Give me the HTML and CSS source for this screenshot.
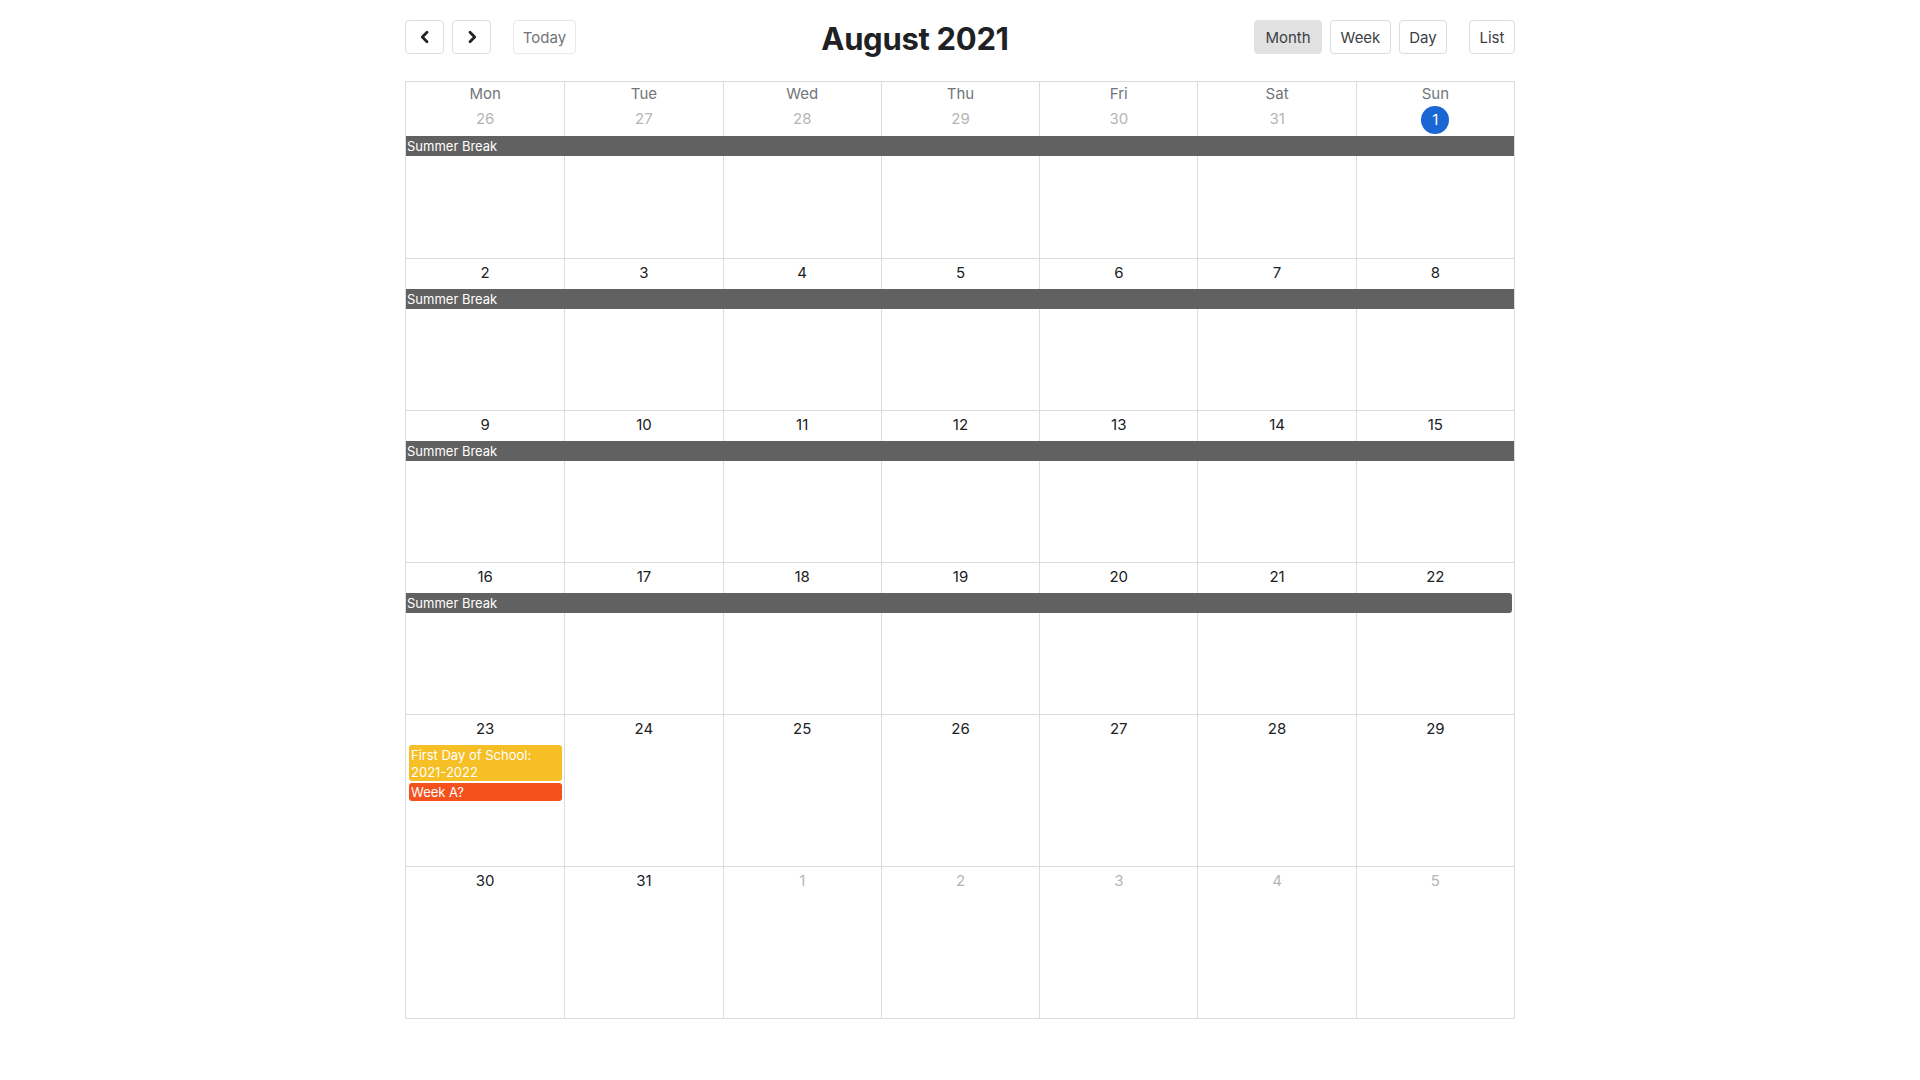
FILE: index.html
```html
<!DOCTYPE html>
<html lang="en">
<head>
<meta charset="utf-8">
<title>August 2021</title>
<link rel="stylesheet" href="styles.css">
</head>
<body>
<div class="container">
  <div class="toolbar">
    <div class="tb-left">
      <div class="btn-group">
        <button class="btn btn-icon" aria-label="prev"><svg width="14" height="14" viewBox="0 0 14 14"><path d="M9 2.3 L4.3 7 L9 11.7" fill="none" stroke="#222" stroke-width="2.8" stroke-linecap="round" stroke-linejoin="round"/></svg></button>
        <button class="btn btn-icon" aria-label="next"><svg width="14" height="14" viewBox="0 0 14 14"><path d="M5 2.3 L9.7 7 L5 11.7" fill="none" stroke="#222" stroke-width="2.8" stroke-linecap="round" stroke-linejoin="round"/></svg></button>
      </div>
      <button class="btn btn-today">Today</button>
    </div>
    <h2 class="title">August 2021</h2>
    <div class="tb-right">
      <div class="btn-group">
        <button class="btn btn-view btn-month is-active">Month</button>
        <button class="btn btn-view btn-week">Week</button>
        <button class="btn btn-view btn-day">Day</button>
      </div>
      <button class="btn btn-view btn-list">List</button>
    </div>
  </div>

  <div class="cal">
    <div class="cal-head">
      <div class="dow">Mon</div><div class="dow">Tue</div><div class="dow">Wed</div><div class="dow">Thu</div><div class="dow">Fri</div><div class="dow">Sat</div><div class="dow">Sun</div>
    </div>

    <div class="week week-first">
      <div class="day c1"><span class="num other">26</span></div>
      <div class="day c2"><span class="num other">27</span></div>
      <div class="day c3"><span class="num other">28</span></div>
      <div class="day c4"><span class="num other">29</span></div>
      <div class="day c5"><span class="num other">30</span></div>
      <div class="day c6"><span class="num other">31</span></div>
      <div class="day c7"><span class="num today">1</span></div>
      <div class="ev ev-gray ev-span-all">Summer Break</div>
    </div>

    <div class="week">
      <div class="day c1"><span class="num">2</span></div>
      <div class="day c2"><span class="num">3</span></div>
      <div class="day c3"><span class="num">4</span></div>
      <div class="day c4"><span class="num">5</span></div>
      <div class="day c5"><span class="num">6</span></div>
      <div class="day c6"><span class="num">7</span></div>
      <div class="day c7"><span class="num">8</span></div>
      <div class="ev ev-gray ev-span-all">Summer Break</div>
    </div>

    <div class="week">
      <div class="day c1"><span class="num">9</span></div>
      <div class="day c2"><span class="num">10</span></div>
      <div class="day c3"><span class="num">11</span></div>
      <div class="day c4"><span class="num">12</span></div>
      <div class="day c5"><span class="num">13</span></div>
      <div class="day c6"><span class="num">14</span></div>
      <div class="day c7"><span class="num">15</span></div>
      <div class="ev ev-gray ev-span-all">Summer Break</div>
    </div>

    <div class="week">
      <div class="day c1"><span class="num">16</span></div>
      <div class="day c2"><span class="num">17</span></div>
      <div class="day c3"><span class="num">18</span></div>
      <div class="day c4"><span class="num">19</span></div>
      <div class="day c5"><span class="num">20</span></div>
      <div class="day c6"><span class="num">21</span></div>
      <div class="day c7"><span class="num">22</span></div>
      <div class="ev ev-gray ev-span-all ev-end">Summer Break</div>
    </div>

    <div class="week">
      <div class="day c1"><span class="num">23</span></div>
      <div class="day c2"><span class="num">24</span></div>
      <div class="day c3"><span class="num">25</span></div>
      <div class="day c4"><span class="num">26</span></div>
      <div class="day c5"><span class="num">27</span></div>
      <div class="day c6"><span class="num">28</span></div>
      <div class="day c7"><span class="num">29</span></div>
      <div class="ev-stack c1">
        <div class="ev ev-single ev-yellow">First Day of School: 2021-2022</div>
        <div class="ev ev-single ev-red">Week A?</div>
      </div>
    </div>

    <div class="week">
      <div class="day c1"><span class="num">30</span></div>
      <div class="day c2"><span class="num">31</span></div>
      <div class="day c3"><span class="num other">1</span></div>
      <div class="day c4"><span class="num other">2</span></div>
      <div class="day c5"><span class="num other">3</span></div>
      <div class="day c6"><span class="num other">4</span></div>
      <div class="day c7"><span class="num other">5</span></div>
    </div>
  </div>
</div>
</body>
</html>
```

FILE: styles.css
```css
html, body {
  margin: 0;
  padding: 0;
  background: #fff;
}

body {
  font-family: "Inter", "Open Sans", "Liberation Sans", sans-serif;
  color: #3c4043;
}

.container {
  width: 1110px;
  margin: 0 auto;
  padding-top: 20px;
}

/* toolbar */
.toolbar {
  display: flex;
  justify-content: space-between;
  align-items: center;
  height: 34px;
  margin-bottom: 27px;
}

.tb-left, .tb-right {
  display: flex;
  align-items: center;
  gap: 22px;
}

.btn-group {
  display: flex;
  gap: 8px;
}

.btn {
  font-family: inherit;
  height: 34px;
  border: 1px solid #dadce0;
  border-radius: 4px;
  background: #fff;
  color: #3c4043;
  font-size: 15px;
  padding: 0;
  display: flex;
  align-items: center;
  justify-content: center;
  cursor: pointer;
}

.btn-icon { width: 39px; }
.btn-month { width: 68px; }
.btn-week { width: 61px; }
.btn-day { width: 48px; }
.btn-list { width: 46px; }

.btn-today {
  width: 63px;
  color: #70757a;
  border-color: #e8e8e8;
}

.btn-view.is-active {
  background: #e1e1e1;
  border-color: #e1e1e1;
}

.title {
  margin: 2px 0 0;
  font-size: 31px;
  font-weight: 700;
  color: #202124;
  letter-spacing: -0.3px;
}

/* calendar */
.cal {
  border: 1px solid #dcdcdc;
}

.cal-head {
  display: grid;
  grid-template-columns: repeat(7, 1fr);
  height: 24px;
}

.dow {
  text-align: center;
  font-size: 15px;
  line-height: 24px;
  color: #70757a;
  border-left: 1px solid #dcdcdc;
}

.dow:first-child {
  border-left: 0;
}

.week {
  display: grid;
  grid-template-columns: repeat(7, 1fr);
  grid-template-rows: 30px auto 1fr;
  height: 151px;
  border-top: 1px solid #dcdcdc;
}

.week-first {
  border-top: 0;
  height: 152px;
  grid-template-rows: 30px auto 1fr;
}

.day {
  grid-row: 1 / -1;
  border-left: 1px solid #dcdcdc;
  text-align: center;
}

.day.c1 { grid-column: 1; border-left: 0; }
.day.c2 { grid-column: 2; }
.day.c3 { grid-column: 3; }
.day.c4 { grid-column: 4; }
.day.c5 { grid-column: 5; }
.day.c6 { grid-column: 6; }
.day.c7 { grid-column: 7; }

.num {
  display: inline-block;
  font-size: 15px;
  line-height: 27px;
  color: #202124;
}

.week-first .num {
  line-height: 25px;
}

.num.other {
  color: #b5b5b5;
}

.num.today {
  width: 28px;
  height: 28px;
  line-height: 28px;
  border-radius: 50%;
  background: #1a66d2;
  color: #fff;
}

/* events */
.ev {
  grid-row: 2;
  position: relative;
  z-index: 1;
  color: #fff;
  font-size: 13px;
  line-height: 20px;
  padding: 0 2px 0 1px;
  white-space: nowrap;
  overflow: hidden;
}

.ev-gray {
  background: #616161;
}

.ev-span-all {
  grid-column: 1 / -1;
}

.ev-end {
  margin-right: 2px;
  border-top-right-radius: 3px;
  border-bottom-right-radius: 3px;
}

.ev-stack {
  grid-row: 2;
  grid-column: 1;
  position: relative;
  z-index: 1;
  margin: 0 2px 0 3px;
  display: flex;
  flex-direction: column;
  gap: 2px;
}

.ev-single {
  border-radius: 3px;
  white-space: normal;
  line-height: 16.5px;
  padding: 2px 3px 1px 2px;
}

.ev-yellow {
  background: #f6bf26;
}

.ev-red {
  background: #f4511e;
  padding: 1px 3px 0 2px;
}
```
